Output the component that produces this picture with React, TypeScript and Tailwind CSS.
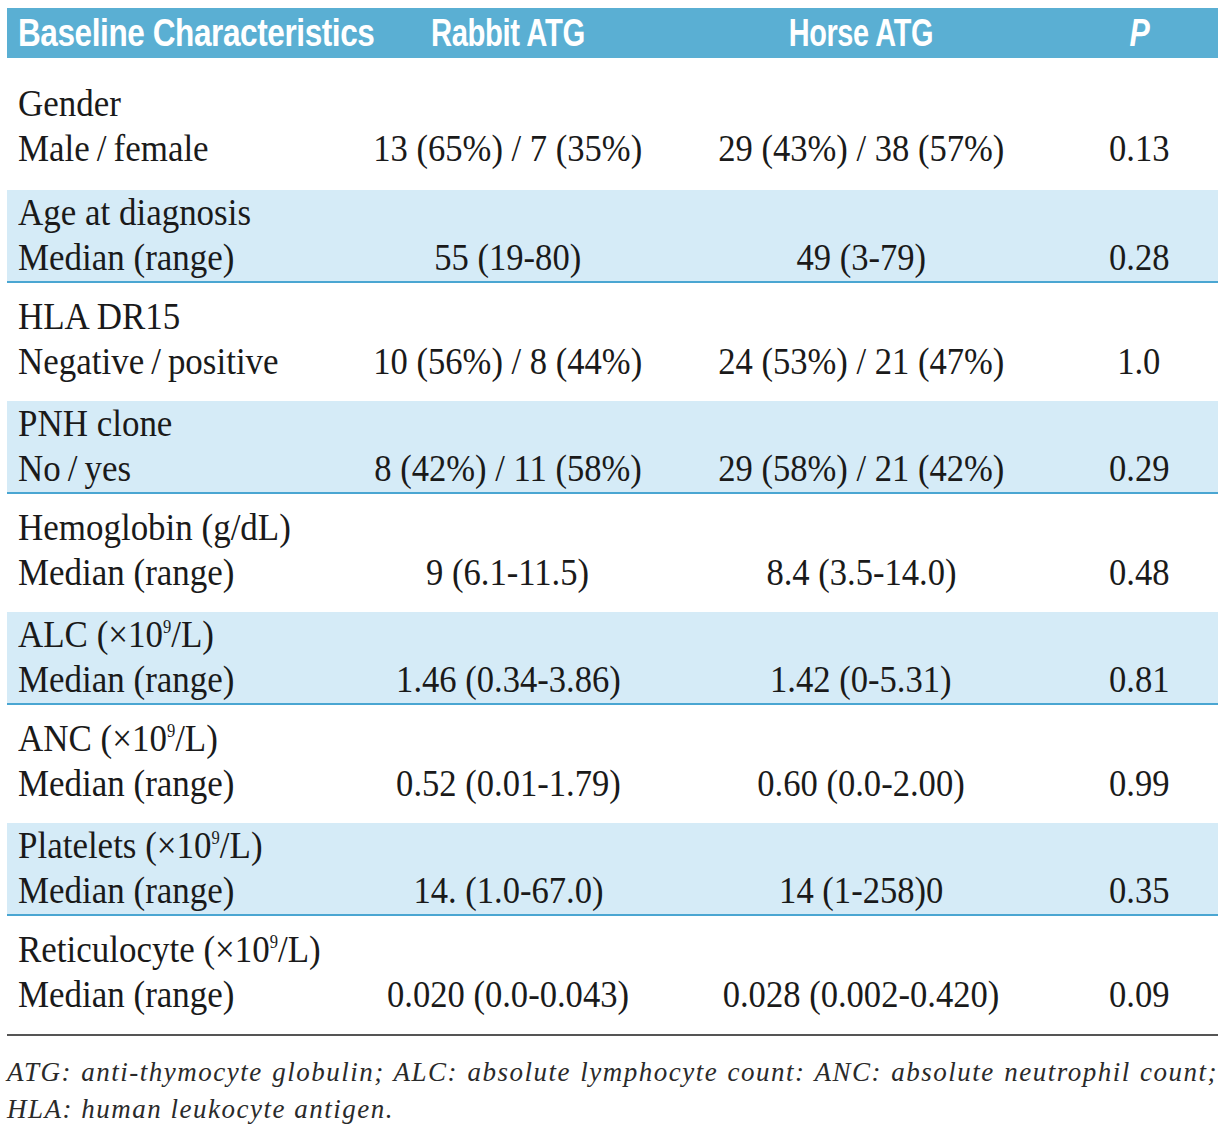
import type { ReactNode } from 'react';

type Row = {
  title: ReactNode;
  sub: string;
  rabbit: string;
  horse: string;
  p: string;
};

const perL = (
  <>
    (×10<span className="align-[14px] text-[18px] leading-none">9</span>/L)
  </>
);

const rows: Row[] = [
  { title: 'Gender', sub: 'Male\u2009/\u2009female', rabbit: '13 (65%) / 7 (35%)', horse: '29 (43%) / 38 (57%)', p: '0.13' },
  { title: 'Age at diagnosis', sub: 'Median (range)', rabbit: '55 (19-80)', horse: '49 (3-79)', p: '0.28' },
  { title: 'HLA DR15', sub: 'Negative\u2009/\u2009positive', rabbit: '10 (56%) / 8 (44%)', horse: '24 (53%) / 21 (47%)', p: '1.0' },
  { title: 'PNH clone', sub: 'No\u2009/\u2009yes', rabbit: '8 (42%) / 11 (58%)', horse: '29 (58%) / 21 (42%)', p: '0.29' },
  { title: 'Hemoglobin (g/dL)', sub: 'Median (range)', rabbit: '9 (6.1-11.5)', horse: '8.4 (3.5-14.0)', p: '0.48' },
  { title: <>ALC {perL}</>, sub: 'Median (range)', rabbit: '1.46 (0.34-3.86)', horse: '1.42 (0-5.31)', p: '0.81' },
  { title: <>ANC {perL}</>, sub: 'Median (range)', rabbit: '0.52 (0.01-1.79)', horse: '0.60 (0.0-2.00)', p: '0.99' },
  { title: <>Platelets {perL}</>, sub: 'Median (range)', rabbit: '14. (1.0-67.0)', horse: '14 (1-258)0', p: '0.35' },
  { title: <>Reticulocyte {perL}</>, sub: 'Median (range)', rabbit: '0.020 (0.0-0.043)', horse: '0.028 (0.002-0.420)', p: '0.09' },
];

const cols = 'grid grid-cols-[347px_308px_398px_158px]';

// the source face is a condensed serif, so squeeze a larger Liberation Serif
function Left({ children }: { children: ReactNode }) {
  return <span className="inline-block origin-left scale-x-[0.92] whitespace-nowrap">{children}</span>;
}

function Mid({ children }: { children: ReactNode }) {
  return <span className="inline-block scale-x-[0.91] whitespace-nowrap">{children}</span>;
}

function DataRow({ row, index }: { row: Row; index: number }) {
  const shaded = index % 2 === 1;
  const first = index === 0;
  return (
    <div
      className={
        shaded
          ? `${cols} border-b-2 border-[#4aa6d2] bg-[#d5ebf7] pb-px`
          : first
            ? `${cols} pb-[19px] pt-[23px]`
            : `${cols} pb-[17px] pt-[11px]`
      }
    >
      <div className="col-span-4 pl-[11px]">
        <Left>{row.title}</Left>
      </div>
      <div className="pl-[11px]">
        <Left>{row.sub}</Left>
      </div>
      <div className="text-center">
        <Mid>{row.rabbit}</Mid>
      </div>
      <div className="text-center">
        <Mid>{row.horse}</Mid>
      </div>
      <div className="text-center">
        <Mid>{row.p}</Mid>
      </div>
    </div>
  );
}

export default function App() {
  return (
    <div className="min-h-[1134px] w-[1224px] bg-white pl-[7px] pr-[6px] pt-[8px]">
      <div className="w-[1211px]">
        <div className={`${cols} h-[50px] items-center bg-[#5aafd3] font-['Liberation_Sans',Arial,sans-serif] text-[38px] font-bold leading-none tracking-[-0.5px] text-white`}>
          <div className="pl-[11px]">
            <span className="inline-block origin-left scale-x-[0.83] whitespace-nowrap">Baseline Characteristics</span>
          </div>
          <div className="text-center">
            <span className="inline-block scale-x-[0.77] whitespace-nowrap">Rabbit ATG</span>
          </div>
          <div className="text-center">
            <span className="inline-block scale-x-[0.76] whitespace-nowrap">Horse ATG</span>
          </div>
          <div className="text-center">
            <span className="inline-block scale-x-[0.8] italic">P</span>
          </div>
        </div>
        <div className="font-['Liberation_Serif',serif] text-[38px] leading-[45px] text-[#1a1a1a]">
          {rows.map((row, i) => (
            <DataRow key={i} row={row} index={i} />
          ))}
        </div>
        <div className="border-t-2 border-[#555]" />
        <div className="mt-[18px] font-['Liberation_Serif',serif] text-[27px] italic leading-[37px] tracking-[1.5px] text-[#2a2a2a]">
          <p className="[text-align-last:justify]">
            ATG: anti-thymocyte globulin; ALC: absolute lymphocyte count: ANC: absolute neutrophil count;
          </p>
          <p>HLA: human leukocyte antigen.</p>
        </div>
      </div>
    </div>
  );
}
